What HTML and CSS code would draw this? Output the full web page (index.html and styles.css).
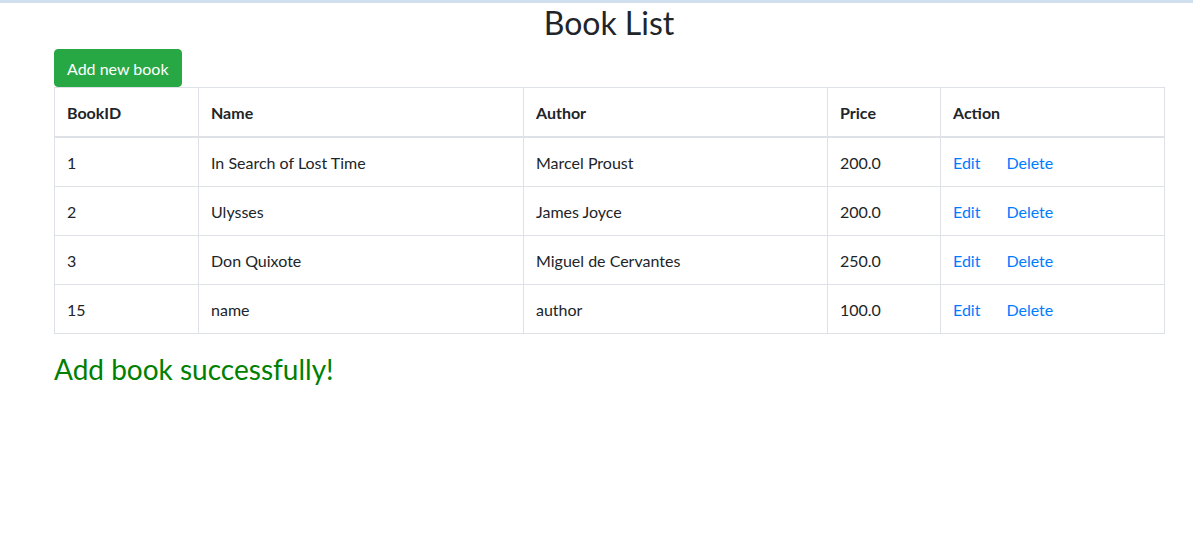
FILE: index.html
```html
<!DOCTYPE html>
<html lang="en">
<head>
<meta charset="utf-8">
<title>Book List</title>
<link rel="stylesheet" href="styles.css">
</head>
<body>
<div class="topbar"></div>
<div class="container">
  <h2 class="title">Book List</h2>
  <a class="btn-add" href="#">Add new book</a>
  <table class="books">
    <thead>
      <tr>
        <th class="c-id">BookID</th>
        <th class="c-name">Name</th>
        <th class="c-author">Author</th>
        <th class="c-price">Price</th>
        <th class="c-action">Action</th>
      </tr>
    </thead>
    <tbody>
      <tr><td>1</td><td>In Search of Lost Time</td><td>Marcel Proust</td><td>200.0</td><td><a class="link" href="#">Edit</a><a class="link link-del" href="#">Delete</a></td></tr>
      <tr><td>2</td><td>Ulysses</td><td>James Joyce</td><td>200.0</td><td><a class="link" href="#">Edit</a><a class="link link-del" href="#">Delete</a></td></tr>
      <tr><td>3</td><td>Don Quixote</td><td>Miguel de Cervantes</td><td>250.0</td><td><a class="link" href="#">Edit</a><a class="link link-del" href="#">Delete</a></td></tr>
      <tr><td>15</td><td>name</td><td>author</td><td>100.0</td><td><a class="link" href="#">Edit</a><a class="link link-del" href="#">Delete</a></td></tr>
    </tbody>
  </table>
  <h3 class="msg">Add book successfully!</h3>
</div>
</body>
</html>
```
FILE: styles.css
```css
* { box-sizing: border-box; }
html, body { margin: 0; padding: 0; background: #fff; }
body {
  font-family: "Lato", "Open Sans", sans-serif;
  font-size: 16px;
  line-height: 1.5;
  color: #212529;
}
.topbar { height: 3px; background: #cfdfee; }
.container { width: 1110px; margin-left: 54px; }
.title {
  margin: 0 0 7px;
  padding-top: 1px;
  font-size: 32px;
  font-weight: 400;
  line-height: 1.2;
  text-align: center;
}
.btn-add {
  display: inline-block;
  background: #28a745;
  border: 1px solid #28a745;
  color: #fff;
  text-decoration: none;
  padding: 7px 12px 5px;
  border-radius: 4px;
  font-size: 16px;
  line-height: 24px;
  vertical-align: top;
}
.books {
  width: 1110px;
  border-collapse: collapse;
  margin-bottom: 19px;
  table-layout: fixed;
}
.books th, .books td {
  border: 1px solid #dee2e6;
  padding: 13px 12px 11px;
  text-align: left;
  vertical-align: top;
  line-height: 24px;
}
.books th { font-weight: 700; border-bottom-width: 2px; }
.c-id { width: 144px; }
.c-name { width: 325px; }
.c-author { width: 304px; }
.c-price { width: 113px; }
.c-action { width: 224px; }
.link { color: #007bff; text-decoration: none; }
.link-del { margin-left: 26px; }
.msg {
  margin: 0;
  font-size: 28px;
  font-weight: 400;
  line-height: 1.2;
  color: #008000;
}
```
